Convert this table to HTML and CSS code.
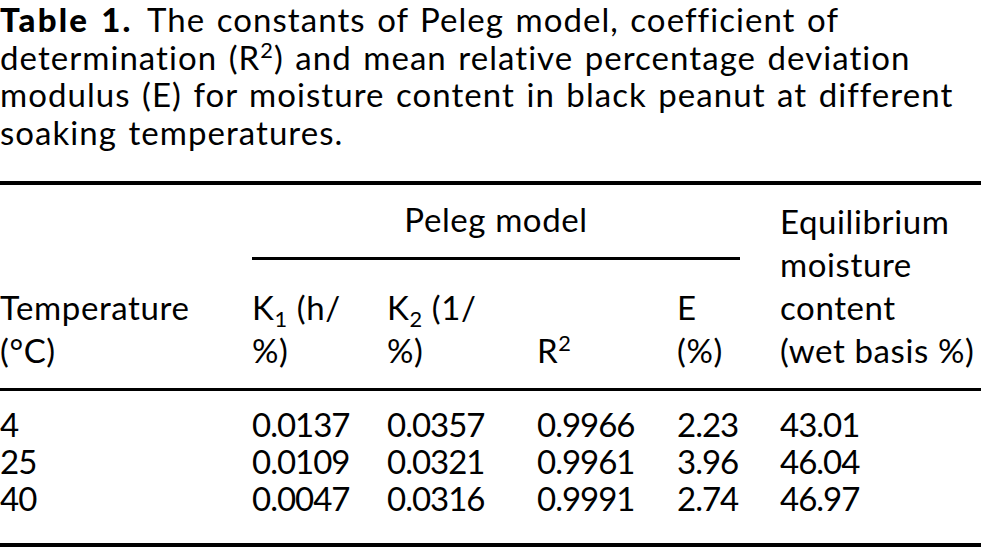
FILE: index.html
```html
<!DOCTYPE html>
<html lang="en">
<head>
<meta charset="utf-8">
<title>Table 1</title>
<link rel="stylesheet" href="styles.css">
</head>
<body>
<figure class="table-wrap">
  <figcaption class="caption"><span class="label">Table 1.</span> The constants of Peleg model, coefficient of<br>determination (R<sup>2</sup>) and mean relative percentage deviation<br>modulus (E) for moisture content in black peanut at different<br>soaking temperatures.</figcaption>
  <table class="data">
    <colgroup>
      <col class="c-temp">
      <col class="c-k1">
      <col class="c-k2">
      <col class="c-r2">
      <col class="c-e">
      <col class="c-eq">
    </colgroup>
    <thead>
      <tr>
        <th class="rowspan-cell" rowspan="2">Temperature<br>(°C)</th>
        <th class="spanner" colspan="4"><div class="spanner-text">Peleg model</div></th>
        <th class="rowspan-cell" rowspan="2">Equilibrium<br>moisture<br>content<br>(wet basis %)</th>
      </tr>
      <tr class="sub">
        <th>K<sub>1</sub> (h/<br>%)</th>
        <th>K<sub>2</sub> (1/<br>%)</th>
        <th>R<sup>2</sup></th>
        <th>E<br>(%)</th>
      </tr>
    </thead>
    <tbody>
      <tr><td>4</td><td>0.0137</td><td>0.0357</td><td>0.9966</td><td>2.23</td><td>43.01</td></tr>
      <tr><td>25</td><td>0.0109</td><td>0.0321</td><td>0.9961</td><td>3.96</td><td>46.04</td></tr>
      <tr><td>40</td><td>0.0047</td><td>0.0316</td><td>0.9991</td><td>2.74</td><td>46.97</td></tr>
    </tbody>
  </table>
</figure>
</body>
</html>
```
FILE: styles.css
```css
html, body {
  margin: 0;
  padding: 0;
  background: #fff;
}

body {
  font-family: Lato, "Open Sans", sans-serif;
  font-size: 33px;
  color: #000;
  width: 981px;
  overflow: hidden;
}

.table-wrap {
  margin: 0;
}

.caption {
  margin: 0 0 30px 0;
  padding-top: 1px;
  line-height: 37.5px;
  letter-spacing: 1.05px;
  word-spacing: 2px;
  white-space: nowrap;
}

.caption .label {
  font-weight: 900;
  letter-spacing: 2.2px;
  margin-right: 4px;
}

sup, sub {
  font-size: 0.66em;
  line-height: 0;
}

sup {
  vertical-align: 0.55em;
}

sub {
  vertical-align: -0.3em;
}

.data {
  width: 981px;
  border-collapse: collapse;
  table-layout: fixed;
  border-top: 4px solid #000;
  border-bottom: 4px solid #000;
}

.c-temp { width: 252px; }
.c-k1 { width: 135px; }
.c-k2 { width: 150px; }
.c-r2 { width: 140px; }
.c-e { width: 103px; }
.c-eq { width: 201px; }

.data th,
.data td {
  padding: 0;
  text-align: left;
  font-weight: 400;
  vertical-align: bottom;
  white-space: nowrap;
}

.data th {
  line-height: 43px;
  letter-spacing: 0.6px;
}

.data td {
  line-height: 37px;
  letter-spacing: -1px;
}

.data thead {
  border-bottom: 3px solid #000;
}

.data .rowspan-cell {
  padding-bottom: 16px;
}

.data .spanner {
  vertical-align: top;
  padding-right: 40px;
}

.spanner-text {
  text-align: center;
  padding: 13px 0 16px;
  border-bottom: 3px solid #000;
}

.data .sub th {
  padding-top: 26px;
  padding-bottom: 16px;
}

.data tbody tr:first-child td {
  padding-top: 15px;
}

.data tbody tr:last-child td {
  padding-bottom: 26px;
}
```
